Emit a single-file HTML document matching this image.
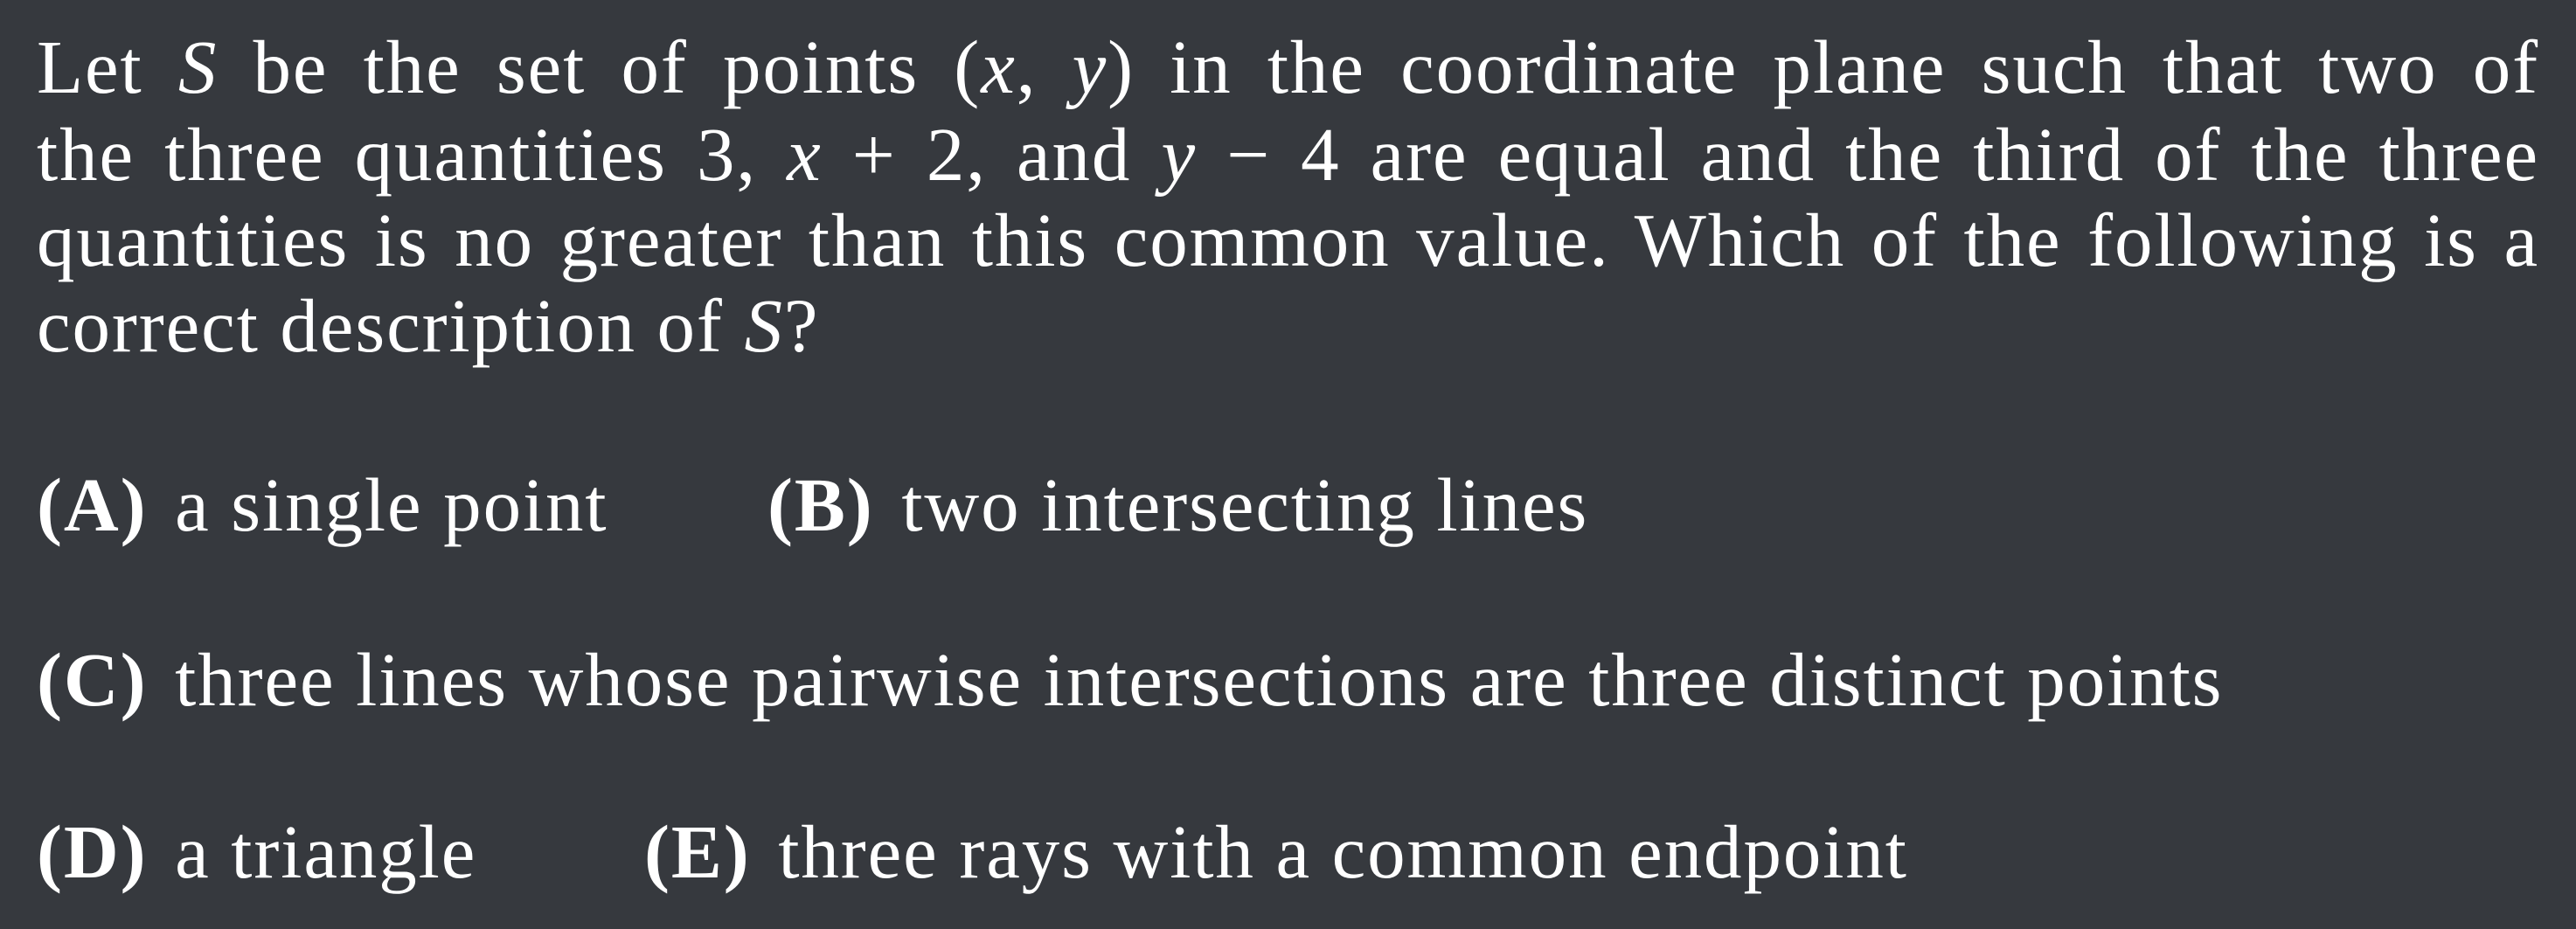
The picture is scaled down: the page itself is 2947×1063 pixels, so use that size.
<!DOCTYPE html>
<html><head><meta charset="utf-8"><style>
html,body{margin:0;padding:0}
body{width:2947px;height:1063px;background:#36393e;color:#fff;font-family:"Liberation Serif",serif;font-size:87px;position:relative;overflow:hidden}
.l{position:absolute;left:42px;line-height:87px;white-space:nowrap;letter-spacing:1.9px}
.j{width:2863px;text-align:justify;text-align-last:justify;white-space:normal}
i{font-style:italic}
b{font-weight:bold;margin-right:8px}
</style></head><body>
<div class="l j" style="top:33px">Let <i>S</i> be the set of points (<i>x</i>, <i>y</i>) in the coordinate plane such that two of</div>
<div class="l j" style="top:133px">the three quantities 3, <i>x</i> + 2, and <i>y</i> − 4 are equal and the third of the three</div>
<div class="l j" style="top:231px">quantities is no greater than this common value. Which of the following is a</div>
<div class="l" style="top:329px">correct description of <i>S</i>?</div>
<div class="l" style="top:534px"><b>(A)</b> a single point</div>
<div class="l" style="top:534px;left:878px"><b>(B)</b> two intersecting lines</div>
<div class="l" style="top:734px"><b>(C)</b> three lines whose pairwise intersections are three distinct points</div>
<div class="l" style="top:931px"><b>(D)</b> a triangle</div>
<div class="l" style="top:931px;left:737px"><b>(E)</b> three rays with a common endpoint</div>
</body></html>
